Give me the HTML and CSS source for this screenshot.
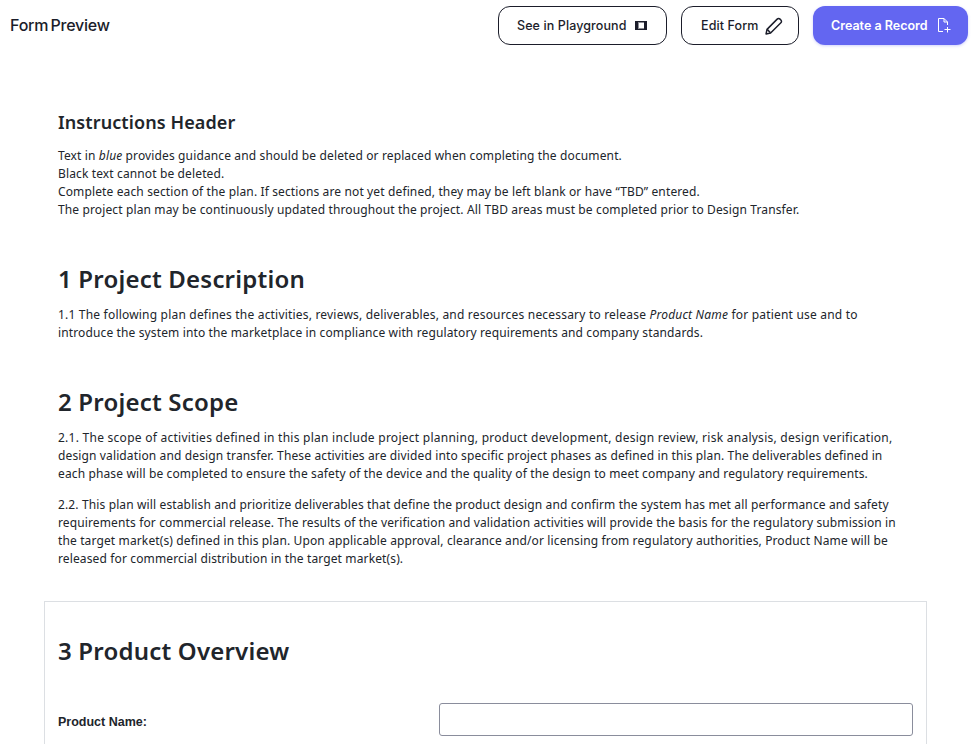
FILE: index.html
```html
<!DOCTYPE html>
<html lang="en">
<head>
    <meta charset="UTF-8">
    <meta name="viewport" content="width=device-width, initial-scale=1.0">
    <title>Form Preview</title>
    <link rel="stylesheet" href="styles.css">
</head>
<body>

    <header class="topbar">
        <h1 class="page-title">Form Preview</h1>
        <div class="actions">
            <button class="btn btn-outline btn-playground">
                See in Playground
                <svg width="12" height="9" viewBox="0 0 12 9">
                    <path fill="#1b1d2a" d="M0 0h12v9H0z"/>
                    <path fill="#ffffff" d="M3 1.500h6v6H3z"/>
                    <path fill="#8d8e96" d="M3 1.500h1v6H3z"/>
                </svg>
            </button>
            <button class="btn btn-outline btn-edit">
                Edit Form
                <svg width="18" height="18" viewBox="0 0 17 17" fill="none" stroke="#1b1d2a" stroke-width="1.400" stroke-linejoin="round">
                    <path d="M1 16l.9-4.300L11.500 2a1.900 1.900 0 0 1 2.700 0l.8.800a1.900 1.900 0 0 1 0 2.700L5.300 15.100z"/>
                    <path d="M2 11.700l3.200 3.200"/>
                </svg>
            </button>
            <button class="btn btn-primary">
                Create a Record
                <svg width="14" height="15" viewBox="0 0 14 15" fill="none" stroke="#ffffff" stroke-width="1">
                    <path d="M5 13.500H.5V.5h5.500l3.500 3.500v3"/>
                    <path d="M6 .5v3.500h3.500"/>
                    <path d="M9.500 9v5.500M6.500 11.500h6"/>
                </svg>
            </button>
        </div>
    </header>

    <main class="doc">
        <section class="instructions">
            <h3>Instructions Header</h3>
            <p>Text in <em>blue</em> provides guidance and should be deleted or replaced when completing the document.<br>
            Black text cannot be deleted.<br>
            Complete each section of the plan. If sections are not yet defined, they may be left blank or have “TBD” entered.<br>
            The project plan may be continuously updated throughout the project. All TBD areas must be completed prior to Design Transfer.</p>
        </section>

        <section class="description">
            <h2>1 Project Description</h2>
            <p><span class="wide-line">1.1 The following plan defines the activities, reviews, deliverables, and resources necessary to release <em>Product Name</em> for patient use and to</span><br>
            introduce the system into the marketplace in compliance with regulatory requirements and company standards.</p>
        </section>

        <section class="scope">
            <h2>2 Project Scope</h2>
            <p><span class="wider-line">2.1. The scope of activities defined in this plan include project planning, product development, design review, risk analysis, design verification,</span> design validation and design transfer. These activities are divided into specific project phases as defined in this plan. The deliverables defined in each phase will be completed to ensure the safety of the device and the quality of the design to meet company and regulatory requirements.</p>
            <p>2.2. This plan will establish and prioritize deliverables that define the product design and confirm the system has met all performance and safety requirements for commercial release. The results of the verification and validation activities will provide the basis for the regulatory submission in the target market(s) defined in this plan. Upon applicable approval, clearance and/or licensing from regulatory authorities, Product Name will be released for commercial distribution in the target market(s).</p>
        </section>

        <section class="form-card">
            <h2>3 Product Overview</h2>
            <div class="field">
                <label for="productName">Product Name:</label>
                <input type="text" id="productName">
            </div>
        </section>
    </main>

</body>
</html>
```

FILE: styles.css
```css
body {
    margin: 0;
    height: 744px;
    overflow: hidden;
    font-family: "Noto Sans", sans-serif;
    background: #ffffff;
    color: #21252b;
}

.topbar {
    display: flex;
    justify-content: space-between;
    align-items: center;
    padding: 6px 3px 0 10px;
}

.page-title {
    margin: 0 0 2px 0;
    font-family: Inter, sans-serif;
    font-size: 16px;
    font-weight: 500;
    letter-spacing: -0.2px;
    word-spacing: -2px;
    color: #1b1d2a;
}

.actions {
    display: flex;
    gap: 14px;
}

.btn {
    display: flex;
    align-items: center;
    height: 39px;
    box-sizing: border-box;
    border-radius: 12px;
    font-family: Inter, sans-serif;
    font-size: 12.500px;
    font-weight: 500;
    cursor: pointer;
}

.btn-outline {
    background: #ffffff;
    border: 1px solid #1b1d2a;
    color: #1b1d2a;
    letter-spacing: 0.1px;
}

.btn-playground {
    width: 169px;
    padding: 0 0 0 18px;
    gap: 9px;
}

.btn-edit {
    width: 118px;
    padding: 0 0 0 19px;
    gap: 7px;
}

.btn-primary {
    width: 155px;
    padding: 0 0 0 18px;
    gap: 10px;
    border: none;
    background: #6366f1;
    color: #ffffff;
    font-weight: 600;
    box-shadow: 0 1px 3px rgba(99, 102, 241, 0.3);
}

.doc {
    padding: 0 44px;
}

.doc p {
    margin: 0;
    max-width: 853px;
    font-size: 12px;
    line-height: 18px;
    letter-spacing: 0.13px;
    color: #21252b;
}

.doc .wide-line {
    letter-spacing: 0.195px;
}

.doc .wider-line {
    letter-spacing: 0.26px;
}

.doc h2 {
    margin: 0;
    font-size: 24px;
    font-weight: 600;
    line-height: 32px;
    letter-spacing: 0.2px;
}

.doc h3 {
    margin: 0 0 13px 0;
    font-size: 18px;
    font-weight: 600;
    line-height: 24px;
    letter-spacing: 0.1px;
}

section {
    padding: 0 14px;
}

.instructions {
    padding-top: 65px;
}

.description {
    padding-top: 44px;
}

.description h2, .scope h2 {
    margin-bottom: 11px;
}

.scope {
    padding-top: 44px;
}

.scope p + p {
    margin-top: 13px;
}

.form-card {
    margin-top: 33px;
    padding: 33px 13px 0 13px;
    height: 200px;
    border: 1px solid #dcdfe3;
}

.field {
    display: grid;
    grid-template-columns: 381px 1fr;
    align-items: center;
    margin-top: 36px;
}

.field label {
    padding-top: 5px;
    font-family: "Liberation Sans", sans-serif;
    font-size: 12.500px;
    font-weight: 700;
}

.field input {
    height: 33px;
    box-sizing: border-box;
    border: 1px solid #8a8d9c;
    border-radius: 3px;
}
```
